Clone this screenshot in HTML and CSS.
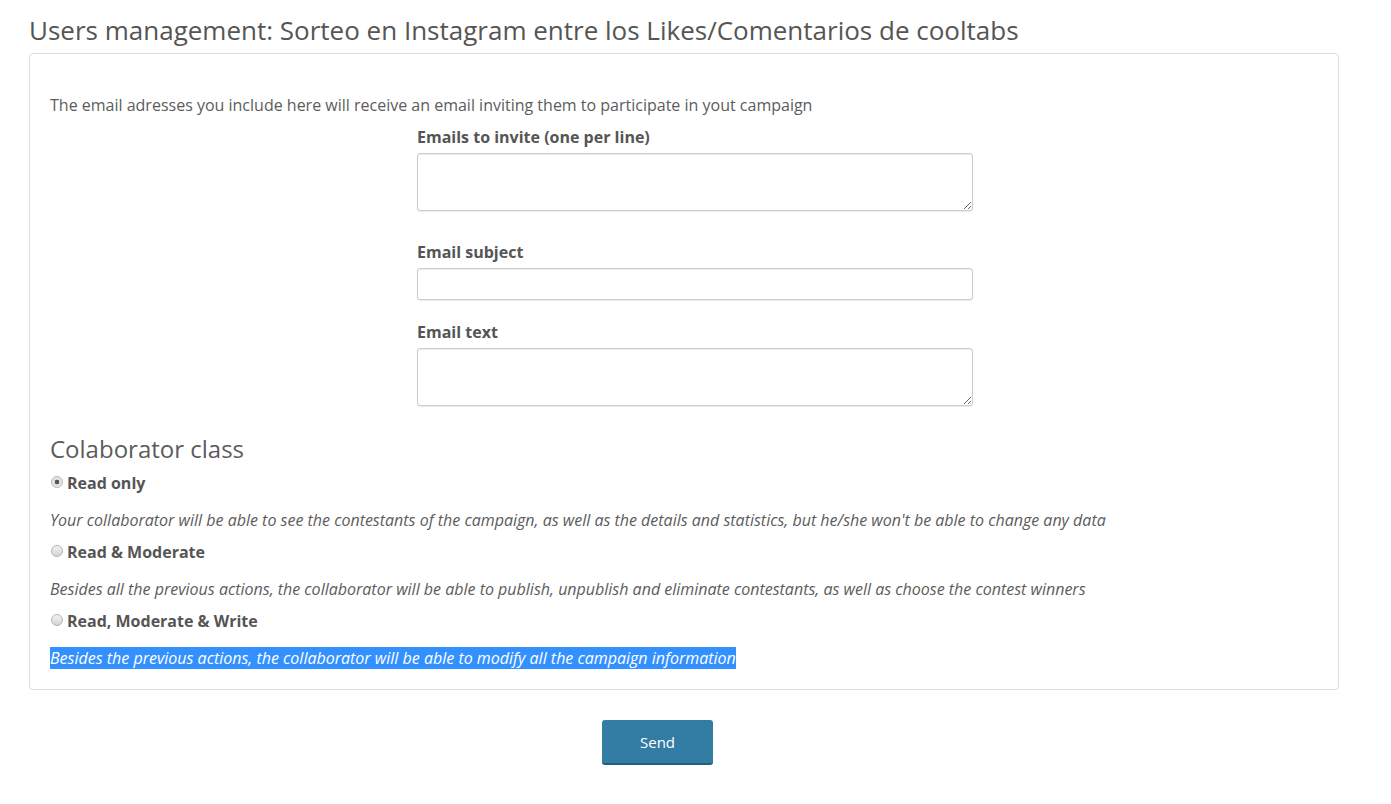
FILE: index.html
```html
<!DOCTYPE html>
<html lang="en">
<head>
    <meta charset="UTF-8">
    <meta name="viewport" content="width=device-width, initial-scale=1.0">
    <title>Users management</title>
    <link rel="stylesheet" href="styles.css">
</head>
<body>
    <div class="page">
        <h1 class="page-title">Users management: Sorteo en Instagram entre los Likes/Comentarios de cooltabs</h1>

        <form class="panel">
            <p class="intro">The email adresses you include here will receive an email inviting them to participate in yout campaign</p>

            <div class="fields">
                <div class="form-group">
                    <label for="emails">Emails to invite (one per line)</label>
                    <textarea id="emails" class="form-control"></textarea>
                </div>
                <div class="form-group">
                    <label for="subject">Email subject</label>
                    <input type="text" id="subject" class="form-control input">
                </div>
                <div class="form-group">
                    <label for="text">Email text</label>
                    <textarea id="text" class="form-control"></textarea>
                </div>
            </div>

            <h3 class="section-title">Colaborator class</h3>

            <div class="radio">
                <label><input type="radio" name="role" value="read" checked> Read only</label>
            </div>
            <p class="help">Your collaborator will be able to see the contestants of the campaign, as well as the details and statistics, but he/she won't be able to change any data</p>

            <div class="radio">
                <label><input type="radio" name="role" value="moderate"> Read &amp; Moderate</label>
            </div>
            <p class="help">Besides all the previous actions, the collaborator will be able to publish, unpublish and eliminate contestants, as well as choose the contest winners</p>

            <div class="radio">
                <label><input type="radio" name="role" value="write"> Read, Moderate &amp; Write</label>
            </div>
            <p class="help"><span class="selected">Besides the previous actions, the collaborator will be able to modify all the campaign information</span></p>
        </form>

        <div class="actions">
            <button type="button" class="btn">Send</button>
        </div>
    </div>
</body>
</html>
```

FILE: styles.css
```css
body {
    font-family: "Open Sans", Arial, sans-serif;
    color: #5c5c5c;
    background: #fff;
    margin: 0;
}
.page {
    padding-left: 29px;
    width: 1310px;
}
.page-title {
    font-size: 26px;
    font-weight: 400;
    line-height: 30px;
    margin: 15px 0 8px;
    color: #555;
}
.panel {
    border: 1px solid #ddd;
    border-radius: 4px;
    padding: 20px 20px 20px 20px;
}
.intro {
    font-size: 16px;
    line-height: 22px;
    margin: 20px 0 10px;
}
.fields {
    margin-left: 367px;
    width: 556px;
}
.form-group {
    margin-bottom: 21px;
}
.form-group:first-child {
    margin-bottom: 30px;
}
label {
    display: block;
    font-size: 16px;
    font-weight: 700;
    line-height: 21px;
    padding-top: 1px;
    margin-bottom: 5px;
    color: #555;
}
.form-control {
    display: block;
    width: 100%;
    box-sizing: border-box;
    border: 1px solid #ccc;
    border-radius: 3px;
    box-shadow: inset 0 1px 1px rgba(0, 0, 0, 0.075), 0 1px 1px rgba(0, 0, 0, 0.08);
    font-family: inherit;
    font-size: 15px;
    padding: 6px 10px;
    margin: 0;
}
textarea.form-control {
    height: 58px;
}
.input {
    height: 32px;
}
.section-title {
    font-size: 24px;
    font-weight: 400;
    line-height: 26px;
    margin: 30px 0 10px;
}
.radio label {
    display: flex;
    align-items: center;
    gap: 4px;
    margin: 0;
    padding: 0;
    line-height: 22px;
}
.radio input {
    -webkit-appearance: none;
    appearance: none;
    width: 12px;
    height: 12px;
    margin: 0 0 3px 1px;
    border: 1px solid #b4b4b4;
    border-radius: 50%;
    background: linear-gradient(#f2f2f2, #d4d4d4);
    box-sizing: border-box;
}
.radio input:checked {
    background: radial-gradient(circle, #555 0, #555 2px, #ddd 2.6px, #f0f0f0 6px);
}
.help {
    font-size: 16px;
    font-style: italic;
    line-height: 22px;
    margin: 15px 0 10px;
}
.help:last-child {
    margin-bottom: 0;
}
.selected {
    background: #3390ff;
    color: #fff;
}
.actions {
    padding: 30px 0 0 573px;
}
.btn {
    width: 111px;
    height: 45px;
    background: #337ca4;
    border: none;
    border-bottom: 2px solid #275d7b;
    border-radius: 3px;
    color: #fff;
    font-family: inherit;
    font-size: 15px;
    cursor: pointer;
}
.btn:hover {
    background: #2d6e92;
}
```
